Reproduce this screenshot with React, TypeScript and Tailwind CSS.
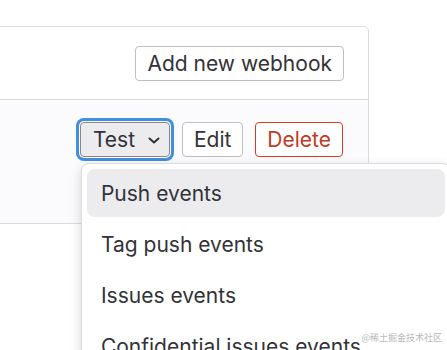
import React from "react";

export default function App() {
  const items = ["Push events", "Tag push events", "Issues events", "Confidential issues events"];
  return (
    <div
      className="relative h-[350px] w-[447px] overflow-hidden bg-white text-[#333238]"
      style={{ fontFamily: "Inter, 'Noto Sans', sans-serif" }}
    >
      <div className="ml-[-2px] mt-[26px] w-[371px] rounded-tr-[5px] border border-[#dcdcde]">
        <div className="flex h-[72px] items-center justify-end pr-[24px]">
          <button className="h-[35px] rounded-[4px] border border-[#bfbfc3] bg-white px-[11px] text-[21px] leading-none text-[#333238]">
            Add new webhook
          </button>
        </div>
        <div className="flex h-[124px] items-start justify-end gap-[12px] border-t border-[#dcdcde] bg-[#fbfafd] pr-[25px] pt-[22px]">
          <div className="relative">
            <button className="flex h-[35px] w-[90px] items-center gap-[13px] rounded-[4px] border border-[#89888d] bg-[#ececef] pl-[12px] text-[21px] leading-none text-[#333238] shadow-[0_0_0_1px_#fff,0_0_0_4px_#428fdc]">
              Test
              <svg width="12" height="7" viewBox="0 0 12 7" className="mt-[2px]">
                <path d="M1.5 1.5 L6 5.5 L10.5 1.5" fill="none" stroke="#333238" strokeWidth="2" strokeLinecap="round" strokeLinejoin="round" />
              </svg>
            </button>
            <div className="absolute left-[1px] top-[41px] z-10 w-[370px] rounded-[8px] border border-[#dcdcde] bg-white p-[5px] shadow-[0_4px_12px_rgba(5,5,6,0.16)]">
              <div className="flex flex-col gap-[3px]">
                {items.map((t, i) => (
                  <div
                    key={t}
                    className={`flex h-[48px] items-center rounded-[8px] pl-[14px] text-[21px] leading-none text-[#333238] whitespace-nowrap ${i === 0 ? "bg-[#ececef]" : ""}`}
                  >
                    {t}
                  </div>
                ))}
              </div>
            </div>
          </div>
          <button className="h-[35px] rounded-[4px] border border-[#bfbfc3] bg-white px-[11px] text-[21px] leading-none text-[#333238]">
            Edit
          </button>
          <button className="h-[35px] rounded-[4px] border border-[#dd3b1e] bg-white px-[11px] text-[21px] leading-none text-[#c23a1e]">
            Delete
          </button>
        </div>
      </div>
      <div
        className="absolute bottom-[8px] right-[5px] z-20 text-[9px] leading-none text-[#b8b8b8]"
        style={{ fontFamily: "'Noto Sans CJK SC', sans-serif" }}
      >
        @稀土掘金技术社区
      </div>
    </div>
  );
}
